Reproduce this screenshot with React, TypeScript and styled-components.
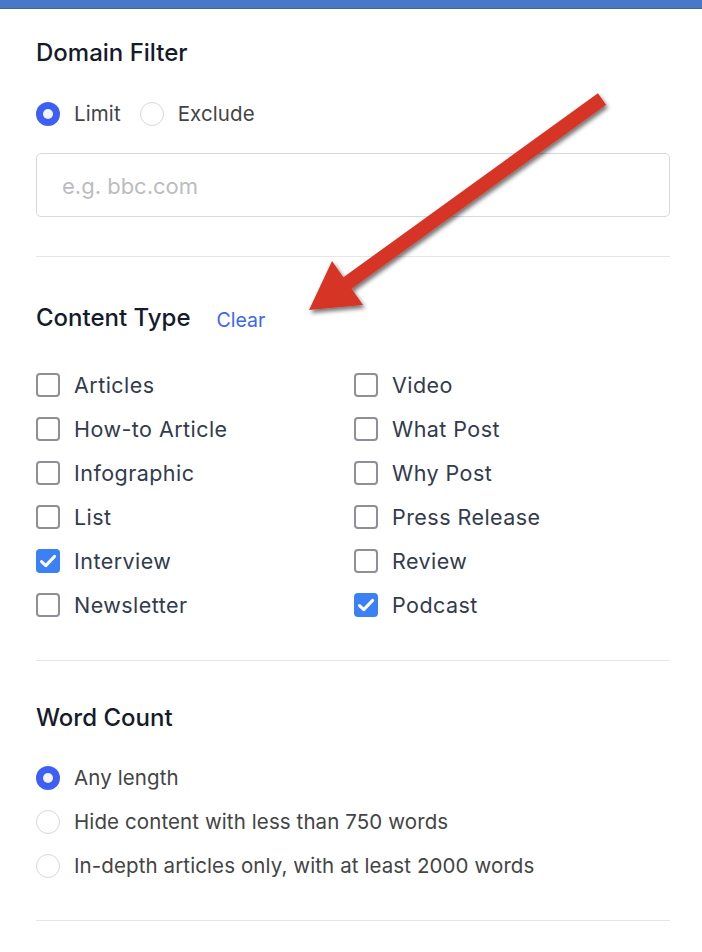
import React from 'react';
import styled, {createGlobalStyle} from 'styled-components';

const GlobalStyle = createGlobalStyle`
  html, body {
    margin: 0;
    padding: 0;
    background: #ffffff;
  }
  body {
    font-family: Inter, "Noto Sans", "Liberation Sans", sans-serif;
    -webkit-font-smoothing: antialiased;
  }
`;

const LEFT = ['Articles', 'How-to Article', 'Infographic', 'List', 'Interview', 'Newsletter'];
const RIGHT = ['Video', 'What Post', 'Why Post', 'Press Release', 'Review', 'Podcast'];
const CHECKED = ['Interview', 'Podcast'];

// interleave so the grid fills row by row
const contentTypes = LEFT.flatMap((l, i) => [l, RIGHT[i]]);

const wordCounts = [
  'Any length',
  'Hide content with less than 750 words',
  'In-depth articles only, with at least 2000 words',
];

const Radio: React.FC<{checked?: boolean}> = ({checked}) => (
  <RadioDot $checked={checked}>{checked && <RadioInner />}</RadioDot>
);

const Checkbox: React.FC<{checked?: boolean}> = ({checked}) => (
  <Box $checked={checked}>
    {checked && (
      <svg width="24" height="24" viewBox="0 0 24 24">
        <path
          d="M5.5 12.6 L9.8 16.6 L18.6 7.4"
          fill="none"
          stroke="#fff"
          strokeWidth="3"
          strokeLinecap="round"
          strokeLinejoin="round"
        />
      </svg>
    )}
  </Box>
);

const Arrow: React.FC = () => (
  <ArrowLayer viewBox="0 0 702 952" width="702" height="952">
    <defs>
      <filter id="arrowShadow" x="-20%" y="-20%" width="140%" height="140%">
        <feDropShadow dx="2" dy="3" stdDeviation="2" floodColor="#000" floodOpacity="0.55" />
      </filter>
    </defs>
    <polygon
      points="597.9,93.3 606.1,104.7 351.6,288.7 363,305 309,310 332,261 343.4,277.3"
      fill="#d63426"
      filter="url(#arrowShadow)"
    />
  </ArrowLayer>
);

const App: React.FC = () => {
  return (
    <Page>
      <GlobalStyle />
      <TopBar />
      <Content>
        <Section $top={29} $bottom={39}>
          <Heading>Domain Filter</Heading>
          <InlineRadios>
            <RadioOption>
              <Radio checked />
              <RadioLabel>Limit</RadioLabel>
            </RadioOption>
            <RadioOption>
              <Radio />
              <RadioLabel>Exclude</RadioLabel>
            </RadioOption>
          </InlineRadios>
          <TextInput placeholder="e.g. bbc.com" />
        </Section>

        <Section $top={46} $bottom={33}>
          <HeadingRow>
            <Heading>Content Type</Heading>
            <ClearLink>Clear</ClearLink>
          </HeadingRow>
          <CheckGrid>
            {contentTypes.map((t) => (
              <CheckRow key={t}>
                <Checkbox checked={CHECKED.includes(t)} />
                <CheckLabel>{t}</CheckLabel>
              </CheckRow>
            ))}
          </CheckGrid>
        </Section>

        <Section $top={42} $bottom={32}>
          <Heading>Word Count</Heading>
          <RadioList>
            {wordCounts.map((w, i) => (
              <RadioRow key={w}>
                <Radio checked={i === 0} />
                <RadioLabel>{w}</RadioLabel>
              </RadioRow>
            ))}
          </RadioList>
        </Section>
      </Content>
      <Arrow />
    </Page>
  );
};
export default App;

const Page = styled.div`
  position: relative;
  width: 702px;
  min-height: 952px;
  overflow: hidden;
`;

const TopBar = styled.div`
  height: 8px;
  background: #4a78c8;
  border-bottom: 1px solid #3c64a8;
`;

const Content = styled.div`
  padding: 0 32px 0 36px;
`;

const Section = styled.section<{$top: number; $bottom: number}>`
  padding-top: ${(p) => p.$top}px;
  padding-bottom: ${(p) => p.$bottom}px;
  border-bottom: 1px solid #e6e6e8;
`;

const Heading = styled.h2`
  margin: 0;
  font-size: 24px;
  line-height: 30px;
  font-weight: 500;
  color: #161b2b;
`;

const HeadingRow = styled.div`
  display: flex;
  align-items: baseline;
  gap: 26px;
  height: 30px;
`;

const ClearLink = styled.a`
  font-size: 19.5px;
  line-height: 30px;
  color: #3c66f4;
  cursor: pointer;
  position: relative;
  top: 1px;
`;

const InlineRadios = styled.div`
  display: flex;
  align-items: center;
  gap: 19px;
  margin-top: 34px;
  height: 24px;
`;

const RadioOption = styled.label`
  display: flex;
  align-items: center;
  gap: 14px;
`;

const RadioDot = styled.span<{$checked?: boolean}>`
  box-sizing: border-box;
  width: 24px;
  height: 24px;
  border-radius: 50%;
  flex: none;
  display: flex;
  align-items: center;
  justify-content: center;
  background: ${(p) => (p.$checked ? '#3d5ff5' : '#ffffff')};
  border: ${(p) => (p.$checked ? 'none' : '1px solid #d7d7d9')};
`;

const RadioInner = styled.span`
  width: 10px;
  height: 10px;
  border-radius: 50%;
  background: #f3f3f5;
`;

const RadioLabel = styled.span`
  font-size: 20.5px;
  letter-spacing: 0.1px;
  color: #444446;
  line-height: 24px;
`;

const TextInput = styled.input`
  display: block;
  box-sizing: border-box;
  width: 634px;
  height: 64px;
  margin-top: 27px;
  padding: 2px 25px 0;
  border: 1px solid #d9d9db;
  border-radius: 5px;
  font-family: inherit;
  font-size: 22px;
  color: #333;
  outline: none;

  &::placeholder {
    color: #bcbcbf;
  }
`;

const CheckGrid = styled.div`
  display: grid;
  grid-template-columns: 318px 1fr;
  grid-auto-rows: 44px;
  margin-top: 30px;
`;

const CheckRow = styled.label`
  display: flex;
  align-items: center;
  gap: 14px;
`;

const Box = styled.span<{$checked?: boolean}>`
  box-sizing: border-box;
  width: 24px;
  height: 24px;
  flex: none;
  border-radius: 4px;
  display: flex;
  align-items: center;
  justify-content: center;
  background: ${(p) => (p.$checked ? '#3b80f5' : '#ffffff')};
  border: ${(p) => (p.$checked ? 'none' : '2.5px solid #8f8e99')};
`;

const CheckLabel = styled.span`
  font-size: 21.5px;
  letter-spacing: 0.45px;
  color: #333b4c;
  line-height: 24px;
`;

const RadioList = styled.div`
  display: grid;
  grid-auto-rows: 44px;
  margin-top: 23px;
`;

const RadioRow = styled.label`
  display: flex;
  align-items: center;
  gap: 14px;
`;

const ArrowLayer = styled.svg`
  position: absolute;
  left: 0;
  top: 0;
  pointer-events: none;
`;
